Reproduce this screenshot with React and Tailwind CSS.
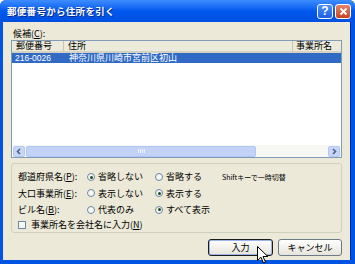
import React from "react";

const jp = { fontFamily: '"Noto Sans CJK JP", "Noto Sans", sans-serif' };

function Radio({ checked, label, width }) {
  return (
    <div className={`flex items-center gap-[3px] ${width}`}>
      <span className="relative w-[8px] h-[8px] rounded-full border border-[#6c87a7] bg-[#f6f6f2] flex items-center justify-center">
        {checked && <span className="w-[3px] h-[3px] rounded-full bg-[#1d4e1e]" />}
      </span>
      <span>{label}</span>
    </div>
  );
}

function ScrollArrow({ dir }) {
  return (
    <div className="w-[12px] h-[11px] rounded-[2px] bg-[#c7d6f7] border border-[#b4c8f2] flex items-center justify-center">
      <svg width="6" height="7" viewBox="0 0 6 7">
        {dir === "left" ? (
          <path d="M4 1 L1.5 3.5 L4 6" stroke="#4d6185" strokeWidth="1.6" fill="none" />
        ) : (
          <path d="M2 1 L4.5 3.5 L2 6" stroke="#4d6185" strokeWidth="1.6" fill="none" />
        )}
      </svg>
    </div>
  );
}

export default function App() {
  return (
    <div className="relative w-[355px] h-[264px] overflow-hidden bg-white text-[9px] text-black" style={jp}>
      <div className="flex flex-col w-full h-full rounded-t-[6px] bg-[#0054e3]">
        {/* Title bar */}
        <div className="h-[22px] flex items-center px-[7px] rounded-t-[6px] bg-gradient-to-b from-[#3d8dff] via-[#0058ee] to-[#0050e0]">
          <span className="text-white font-bold text-[9.5px] tracking-[0.3px] [text-shadow:1px_1px_0_#0a2a8a]">
            郵便番号から住所を引く
          </span>
          <div className="ml-auto flex gap-[2px] mr-[-3px]">
            <div className="w-[16px] h-[15px] rounded-[3px] border border-white bg-gradient-to-b from-[#4f8ef8] to-[#1c5ee6] flex items-center justify-center text-white font-bold text-[12px] leading-none" style={{ fontFamily: '"Liberation Sans", sans-serif' }}>
              ?
            </div>
            <div className="w-[16px] h-[15px] rounded-[3px] border border-white bg-gradient-to-b from-[#e6836a] to-[#c6421f] flex items-center justify-center">
              <svg width="9" height="9" viewBox="0 0 9 9">
                <path d="M1.5 1.5 L7.5 7.5 M7.5 1.5 L1.5 7.5" stroke="white" strokeWidth="1.8" />
              </svg>
            </div>
          </div>
        </div>

        {/* Body */}
        <div className="flex-1 flex flex-col bg-[#ece9d8] ml-[3px] mr-[4px] mb-[4px] border-r border-[#002ab0] px-[8px] pt-[6px]">
          <div className="h-[12px] leading-[12px] pl-[2px]">候補(<span className="underline">C</span>):</div>

          {/* List */}
          <div className="mt-[0px] h-[118px] border border-[#7f9db9] bg-white flex flex-col">
            <div className="h-[12px] flex bg-[#ebeadb] border-b-[2px] border-[#d6d2c2] leading-[10px]">
              <div className="w-[52px] pl-[4px] border-r border-[#c7c5b2]">郵便番号</div>
              <div className="w-[229px] pl-[4px] border-r border-[#c7c5b2]">住所</div>
              <div className="flex-1 pl-[3px]">事業所名</div>
            </div>
            <div className="h-[10px] flex bg-[#316ac5] text-white leading-[10px]">
              <div className="w-[52px] pl-[3px]" style={{ fontFamily: '"Liberation Sans", sans-serif', fontSize: "8.5px" }}>216-0026</div>
              <div className="pl-[5px]">神奈川県川崎市宮前区初山</div>
            </div>
            <div className="flex-1" />
            {/* Horizontal scrollbar */}
            <div className="h-[12px] flex items-center gap-[1px] px-[1px] bg-[#f7f7f3]">
              <ScrollArrow dir="left" />
              <div className="flex-1 h-[11px] flex">
                <div className="w-[230px] h-full rounded-[2px] bg-[#c3d3f8] border border-[#b0c5f2] flex items-center justify-center">
                  <div className="flex gap-[1px]">
                    <span className="w-[1px] h-[4px] bg-[#eef3fe]" />
                    <span className="w-[1px] h-[4px] bg-[#eef3fe]" />
                    <span className="w-[1px] h-[4px] bg-[#eef3fe]" />
                    <span className="w-[1px] h-[4px] bg-[#eef3fe]" />
                  </div>
                </div>
              </div>
              <ScrollArrow dir="right" />
            </div>
          </div>

          {/* Options group */}
          <div className="mt-[5px] h-[70px] border border-[#d0d0bf] rounded-[3px] px-[6px] pt-[5px] flex flex-col">
            <div className="h-[17px] flex items-center">
              <div className="w-[69px]">都道府県名(<span className="underline">P</span>):</div>
              <Radio checked label="省略しない" width="w-[68px]" />
              <Radio label="省略する" width="w-[67px]" />
              <span className="text-[7px]">Shiftキーで一時切替</span>
            </div>
            <div className="h-[17px] flex items-center">
              <div className="w-[69px]">大口事業所(<span className="underline">E</span>):</div>
              <Radio label="表示しない" width="w-[68px]" />
              <Radio checked label="表示する" width="w-[67px]" />
            </div>
            <div className="h-[17px] flex items-center">
              <div className="w-[69px]">ビル名(<span className="underline">B</span>):</div>
              <Radio label="代表のみ" width="w-[68px]" />
              <Radio checked label="すべて表示" width="w-[67px]" />
            </div>
            <div className="h-[15px] flex items-center gap-[5px]">
              <span className="w-[8px] h-[8px] border border-[#6c87a7] bg-[#f6f6f2]" />
              <span>事業所名を会社名に入力(<span className="underline">N</span>)</span>
            </div>
          </div>

          {/* Buttons */}
          <div className="mt-[6px] flex justify-end gap-[5px]">
            <div className="w-[65px] h-[17px] rounded-[3px] border border-[#1c1c1c] bg-gradient-to-b from-white to-[#e6e4da] flex items-center justify-center shadow-[inset_0_0_0_1px_#9cb4e8]">
              入力
            </div>
            <div className="w-[64px] h-[17px] rounded-[3px] border border-[#6d7a8c] bg-gradient-to-b from-white to-[#e6e4da] flex items-center justify-center">
              キャンセル
            </div>
          </div>
        </div>
      </div>

      {/* Mouse cursor */}
      <svg className="absolute left-[257px] top-[246px]" width="12" height="19" viewBox="0 0 12 19">
        <path d="M0.5 0.5 L0.5 14.5 L4 11.2 L6.5 17 L8.5 16.1 L6 10.5 L10.8 10.5 Z" fill="white" stroke="black" strokeWidth="1" />
      </svg>
    </div>
  );
}
